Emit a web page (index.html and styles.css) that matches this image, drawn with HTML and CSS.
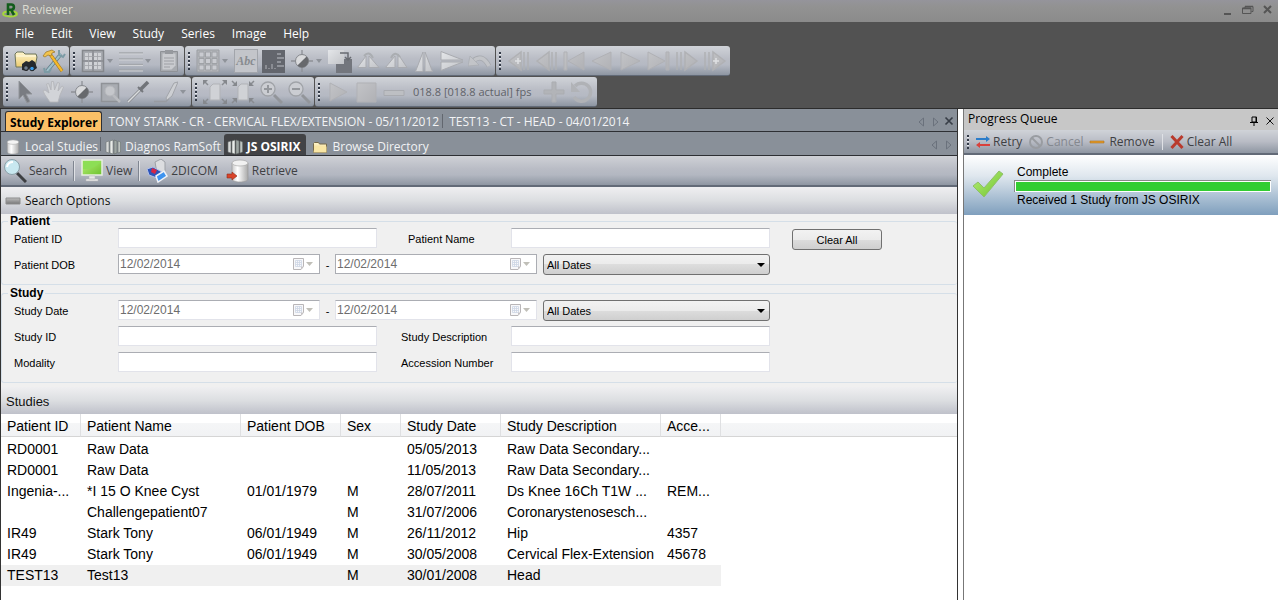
FILE: index.html
```html
<!DOCTYPE html>
<html lang="en">
<head>
<meta charset="utf-8">
<title>Reviewer</title>
<link rel="stylesheet" href="styles.css">
</head>
<body>
<svg class="defs" aria-hidden="true">
  <defs>
    <linearGradient id="pale" x1="0" y1="0" x2="1" y2="1"><stop offset="0" stop-color="#e4e6e9"/><stop offset="1" stop-color="#c2c4c8"/></linearGradient>
    <linearGradient id="faint" x1="0" y1="0" x2="1" y2="1"><stop offset="0" stop-color="#c3c4c7"/><stop offset="1" stop-color="#b0b1b5"/></linearGradient>
    <linearGradient id="folder" x1="0" y1="0" x2="0" y2="1"><stop offset="0" stop-color="#fff6cf"/><stop offset="1" stop-color="#eccb6e"/></linearGradient>
    <linearGradient id="metal" x1="0" y1="0" x2="1" y2="0"><stop offset="0" stop-color="#c9c9c9"/><stop offset=".35" stop-color="#fff"/><stop offset="1" stop-color="#a9a9a9"/></linearGradient>
    <linearGradient id="bar" x1="0" y1="0" x2="0" y2="1"><stop offset="0" stop-color="#bdbdbd"/><stop offset="1" stop-color="#777"/></linearGradient>
    <linearGradient id="leaf" x1="0" y1="0" x2="1" y2="1"><stop offset="0" stop-color="#b9f07a"/><stop offset="1" stop-color="#6cc22c"/></linearGradient>
    <symbol id="contrast" viewBox="0 0 24 24"><path d="M12 1v4M12 19v4M1 12h4M19 12h4" stroke="#8e9197" stroke-width="1.3"/><circle cx="12" cy="12" r="6.5" fill="#d9dadc" stroke="#84878c"/><path d="M7.4 16.6A6.5 6.5 0 0 0 16.6 7.4z" fill="#67696d"/></symbol>
    <symbol id="db" viewBox="0 0 16 18"><path d="M1.500 3.500v11c0 1.700 2.900 2.500 6.500 2.500s6.500-.8 6.500-2.500v-11z" fill="url(#metal)" stroke="#8f8f8f" stroke-width=".6"/><ellipse cx="8" cy="3.500" rx="6.500" ry="2.500" fill="#f4f4f4" stroke="#aaa" stroke-width=".6"/></symbol>
    <symbol id="servers" viewBox="0 0 16 16"><path d="M1 3l3-1v12l-3-1z" fill="#d8dad9" stroke="#707675" stroke-width=".6"/><path d="M5 2l3-1v14l-3-1z" fill="#e8ebe9" stroke="#6c7371" stroke-width=".6"/><path d="M9 1l3 1v12l-3 1z" fill="#9da5a2" stroke="#69706e" stroke-width=".6"/><path d="M13 2l2.500 1v10l-2.500 1z" fill="#bfc5c2" stroke="#6c7371" stroke-width=".6"/></symbol>
    <symbol id="calendar" viewBox="0 0 24 14"><path d="M1.500 1.500h10v8l-2.500 3h-7.500z" fill="#f8f8fa" stroke="#b9b6b8"/><path d="M3.500 3.500h6v6h-6zM5.500 3.500v6M7.500 3.500v6M3.500 5.500h6M3.500 7.500h6" fill="none" stroke="#cdd5e4" stroke-width=".8"/><path d="M9 12.500v-3h2.500z" fill="#c7c4c6"/><path d="M14 5h7l-3.500 4z" fill="#c0bfb8"/></symbol>
    <symbol id="arrows" viewBox="0 0 24 12"><path d="M6.500 2v8l-4.500-4zM16.500 2v8l4.500-4z" fill="none" stroke="#6a717c"/></symbol>
    <symbol id="magnify" viewBox="0 0 24 24"><path d="M15 15l8 8" stroke="#92959a" stroke-width="3"/><circle cx="9" cy="9" r="7" fill="#cbcdd2" stroke="#a0a3a8" stroke-width="1.300"/></symbol>
  </defs>
</svg>
<div class="app">
  <header class="titlebar">
    <svg class="logo" viewBox="0 0 16 16"><ellipse cx="8" cy="12" rx="7" ry="2.500" fill="none" stroke="#a5d83a" stroke-width="1.800"/><path d="M6 13V2.500h3.300a2.500 2.500 0 0 1 0 5.200H6M9 7.700L12 13" fill="none" stroke="#125c1b" stroke-width="2.600"/></svg>
    <h1 class="title">Reviewer</h1>
    <button class="win" aria-label="Minimize"><svg viewBox="0 0 12 12"><path d="M2 10h7" stroke="#555" stroke-width="2"/></svg></button>
    <button class="win" aria-label="Restore"><svg viewBox="0 0 12 12"><path d="M3 4V2.500h8v5H9.500M.5 4h8.500v5.500H.5z" fill="none" stroke="#555"/><path d="M.5 4.500H9M3 2.500h8" stroke="#555" stroke-width="1.500"/></svg></button>
    <button class="win" aria-label="Close"><svg viewBox="0 0 12 12"><path d="M2 2l7 7M9 2l-7 7" stroke="#555" stroke-width="2"/></svg></button>
  </header>
  <nav class="menu"><a href="#">File</a><a href="#">Edit</a><a href="#">View</a><a href="#">Study</a><a href="#">Series</a><a href="#">Image</a><a href="#">Help</a></nav>

  <div class="strips">
    <div class="strip">
      <div class="group"><i class="grip"></i>
        <button class="tool" aria-label="Open"><svg viewBox="0 0 24 24"><path d="M2 18l-1-13 2-2h6l2 2h11l1 3-2 10z" fill="url(#folder)" stroke="#6d745a"/><path d="M2 7h20" stroke="#fffbe4"/><path d="M8 15l4-3 3 1 3-2 3 2 2 6-4 3-3-3-3 3-5-1z" fill="#25292d"/><circle cx="12" cy="19" r="2.300" fill="#6d7c8c" stroke="#222"/><circle cx="18" cy="19.500" r="2.300" fill="#3a9be8" stroke="#222"/></svg></button>
        <button class="tool" aria-label="Tools"><svg viewBox="0 0 24 24"><path d="M5 22L19 5" stroke="#5f7b86" stroke-width="3.600"/><path d="M5 22L19 5" stroke="#9fc0c9" stroke-width="2.200"/><path d="M17 1v5l4 2 2-3M2 19l1 4h4l2-3" fill="none" stroke="#7c9ba5" stroke-width="2"/><path d="M8 5l12 17" stroke="#9a7019" stroke-width="3.200"/><path d="M8 5l12 17" stroke="#f5b92c" stroke-width="2.200"/><path d="M1 7l3-4 6-2 3 2-3 1-1 3-3-1-3 2z" fill="#f2c34e" stroke="#9a7527" stroke-width=".7"/></svg></button>
      </div>
      <div class="group"><i class="grip"></i>
        <button class="tool drop" aria-label="Layout"><svg viewBox="0 0 24 24"><path d="M1.500 1.500h21v21h-21z" fill="#a8abb1" stroke="#84878c" stroke-width="1.500"/><path d="M4 4h7v7H4zM13 4h7v7h-7zM4 13h7v7H4zM13 13h7v7h-7z" fill="#d0d2d6"/><path d="M12 2v20M2 12h20" stroke="#898c91" stroke-width="1.500"/><path d="M4 7.500h16M4 16.500h16M7.500 4v16M16.500 4v16" stroke="#9fa2a7" stroke-width=".8"/></svg></button>
        <button class="tool drop" aria-label="Lines"><svg viewBox="0 0 24 24"><path d="M0 4h24M0 10h24M0 15.500h24M0 21h24" stroke="#a3a6ab" stroke-width="1.500"/><path d="M0 5h24M0 11h24M0 16.500h24M0 22h24" stroke="#cfd1d5"/></svg></button>
        <button class="tool" aria-label="Report"><svg viewBox="0 0 24 24"><path d="M3.500 2.500h17v20h-17z" fill="#a7aaaf" stroke="#8f9297"/><path d="M5.500 4.500h13v12l-4 4h-9z" fill="#c9cbcf"/><path d="M8 1h8v4H8z" fill="#96999e"/><path d="M7 9h10M7 12h10M7 15h10M7 18h6" stroke="#9d9fa4"/></svg></button>
      </div>
      <div class="group"><i class="grip"></i>
        <button class="tool drop" aria-label="Grid"><svg viewBox="0 0 24 24"><path d="M1 1h22v22H1z" fill="#b4b6ba" stroke="#9a9da2"/><path d="M3 3h5v5H3zM9.500 3h5v5h-5zM16 3h5v5h-5zM3 9.500h5v5H3zM9.500 9.500h5v5h-5zM16 9.500h5v5h-5zM3 16h5v5H3zM9.500 16h5v5h-5zM16 16h5v5h-5z" fill="#c9cbd0" stroke="#9b9ea3" stroke-width=".9"/></svg></button>
        <button class="tool word" aria-label="Text overlay">Abc</button>
        <button class="tool" aria-label="Ruler overlay"><svg viewBox="0 0 24 24"><path d="M0 1h23v23H0z" fill="#63666d"/><path d="M15 5h4M15 9h7M15 13h4M15 17h7M4 16v4M7 19v1M10 15v5M13 19v1" stroke="#a0a3a9" stroke-width="1.300"/></svg></button>
        <button class="tool drop" aria-label="Contrast"><svg><use href="#contrast"/></svg></button>
        <button class="tool" aria-label="Layers"><svg viewBox="0 0 24 24"><path d="M8 10h16v14H8z" fill="#73767d"/><path d="M0 1h16v14H0z" fill="url(#pale)"/><path d="M12 4h8v6M17 8l3 3 3-3" fill="none" stroke="#686b71" stroke-width="1.500"/></svg></button>
        <button class="tool" aria-label="Rotate left"><svg viewBox="0 0 24 24"><path d="M1.500 18.500L10 7v11.500zM13 7l10 11.500H13z" fill="url(#pale)" stroke="#a9abb0"/><path d="M8 7q5-6 9 2" fill="none" stroke="#aaadb1" stroke-width="2"/></svg></button>
        <button class="tool" aria-label="Rotate right"><svg viewBox="0 0 24 24"><path d="M1.500 18.500L11 7v11.500zM14 5l9 13.500h-9z" fill="url(#pale)" stroke="#a9abb0"/><path d="M7 9q4-8 9-1" fill="none" stroke="#aaadb1" stroke-width="2"/></svg></button>
        <button class="tool" aria-label="Flip horizontal"><svg viewBox="0 0 24 24"><path d="M3.500 22.500L11 3v19.500zM13 3l7.500 19.500H13z" fill="url(#pale)" stroke="#a9abb0"/></svg></button>
        <button class="tool" aria-label="Flip vertical"><svg viewBox="0 0 24 24"><path d="M1 2.500L23 11H1zM1 13h22L1 21.500z" fill="url(#pale)" stroke="#a9abb0"/></svg></button>
        <button class="tool" aria-label="Undo"><svg viewBox="0 0 24 24"><path d="M5 12q9-8 16 5" fill="none" stroke="#a6a9ae" stroke-width="5"/><path d="M5 12q9-8 16 5" fill="none" stroke="#c2c4c8" stroke-width="3.500"/><path d="M0 17l2-10 9 9z" fill="#c2c4c8" stroke="#a9acb1" stroke-width=".7"/></svg></button>
      </div>
      <div class="group"><i class="grip"></i>
        <button class="tool" aria-label="First study"><svg viewBox="0 0 24 24"><path d="M2 12L14 3v18zM17 3v18M21 3v18" fill="url(#faint)" stroke="#b0b1b4" stroke-width="1.500"/><path d="M8 12h6M11 9v6" stroke="#dfe1e4" stroke-width="1.500"/></svg></button>
        <button class="tool" aria-label="Previous series"><svg viewBox="0 0 24 24"><path d="M2 12L14 3v18zM17 3v18M21 3v18" fill="url(#faint)" stroke="#b0b1b4" stroke-width="1.500"/></svg></button>
        <button class="tool" aria-label="First image"><svg viewBox="0 0 24 24"><path d="M1 3h3v18H1zM5 12L21 3v18z" fill="url(#faint)" stroke="#b0b1b5"/></svg></button>
        <button class="tool" aria-label="Previous image"><svg viewBox="0 0 24 24"><path d="M1 12L20 3v18z" fill="url(#faint)" stroke="#b0b1b5"/></svg></button>
        <button class="tool" aria-label="Next image"><svg viewBox="0 0 24 24"><path d="M21 12L2 3v18z" fill="url(#faint)" stroke="#b0b1b5"/></svg></button>
        <button class="tool" aria-label="Last image"><svg viewBox="0 0 24 24"><path d="M19 3h3v18h-3zM18 12L1 3v18z" fill="url(#faint)" stroke="#b0b1b5"/></svg></button>
        <button class="tool" aria-label="Next series"><svg viewBox="0 0 24 24"><path d="M22 12L10 3v18zM2 3v18M6 3v18" fill="url(#faint)" stroke="#b0b1b4" stroke-width="1.500"/></svg></button>
        <button class="tool" aria-label="Last study"><svg viewBox="0 0 24 24"><path d="M22 12L10 3v18zM2 3v18M6 3v18" fill="url(#faint)" stroke="#b0b1b4" stroke-width="1.500"/><path d="M10 12h6M13 9v6" stroke="#dfe1e4" stroke-width="1.500"/></svg></button>
      </div>
    </div>
    <div class="strip">
      <div class="group"><i class="grip"></i>
        <button class="tool" aria-label="Pointer"><svg viewBox="0 0 24 24"><path d="M5 1v18l4-4 4 8 3-1.500-4-7.500h6z" fill="#797c82" stroke="#92959a"/></svg></button>
        <button class="tool" aria-label="Pan"><svg viewBox="0 0 24 24"><path d="M8 22l-5-7-2-4 2-1 4 3L4.500 4l2-.6L9 10 9.500 1.500h2L12.500 10l3-7.500 2 .5L16 11l4-5 1.600 1L18 15l-2 7z" fill="#d2d4d8" stroke="#b2b4b8" stroke-width=".8"/></svg></button>
        <button class="tool" aria-label="Window level"><svg><use href="#contrast"/></svg></button>
        <button class="tool" aria-label="Zoom region"><svg viewBox="0 0 24 24"><path d="M3.500 3.500h17v18h-17z" fill="#a9acb2" stroke="#8f9297" stroke-width="1.500"/><circle cx="12" cy="11" r="5" fill="#c5c7cb" stroke="#b6b8bc"/><path d="M15 15l7 7" stroke="#b9bbbf" stroke-width="2.500"/></svg></button>
        <button class="tool" aria-label="Draw"><svg viewBox="0 0 24 24"><path d="M2 22L15 9" stroke="#898c91" stroke-width="3"/><path d="M2 22L14 10" stroke="#d9dbde" stroke-width="1.500"/><path d="M14 10l8-8" stroke="#717479" stroke-width="3.500"/><path d="M12 7l5 5" stroke="#74777c" stroke-width="2"/></svg></button>
        <button class="tool drop" aria-label="Annotate"><svg viewBox="0 0 24 24"><path d="M0 21.500h12l3-3" fill="none" stroke="#989ba1" stroke-width="1.500"/><path d="M12 18L20 3l4-1-6 14-5 4z" fill="#cdcfd3" stroke="#a2a5aa"/></svg></button>
      </div>
      <div class="group"><i class="grip"></i>
        <button class="tool" aria-label="Fit to window"><svg viewBox="0 0 24 24"><path d="M7 7l3-3h7v16H7z" fill="#d0d2d6" stroke="#b1b3b7"/><path d="M1 1l4 4M23 1l-4 4M1 23l4-4M23 23l-4-4" stroke="#898c91" stroke-width="1.500"/><path d="M0 0h5L0 5zM24 0v5l-5-5zM0 24v-5l5 5zM24 24h-5l5-5z" fill="#85888d"/></svg></button>
        <button class="tool" aria-label="Actual size"><svg viewBox="0 0 24 24"><path d="M7 7l3-3h7v16H7z" fill="#d0d2d6" stroke="#b1b3b7"/><path d="M1 1l4 4M23 1l-4 4M1 23l4-4M23 23l-4-4" stroke="#898c91" stroke-width="1.500"/><path d="M6 6H1l5-5zM18 6V1l5 5zM6 18v5l-5-5zM18 18h5l-5 5z" fill="#85888d"/></svg></button>
        <button class="tool" aria-label="Zoom in"><svg viewBox="0 0 24 24"><use href="#magnify"/><path d="M5 9h8M9 5v8" stroke="#94979c" stroke-width="2"/></svg></button>
        <button class="tool" aria-label="Zoom out"><svg viewBox="0 0 24 24"><use href="#magnify"/><path d="M5 9h8" stroke="#94979c" stroke-width="2"/></svg></button>
      </div>
      <div class="group"><i class="grip"></i>
        <button class="tool" aria-label="Play"><svg viewBox="0 0 24 24"><path d="M4 3v18l17-9z" fill="url(#faint)" stroke="#b0b1b5"/></svg></button>
        <button class="tool" aria-label="Stop"><svg viewBox="0 0 24 24"><path d="M3 3h19v19H3z" fill="url(#faint)" stroke="#b0b1b5"/></svg></button>
        <button class="tool" aria-label="Slower"><svg viewBox="0 0 24 24"><path d="M2 10.500h20v5H2z" fill="#bdbfc3" stroke="#a9abb0"/></svg></button>
        <span class="fps">018.8 [018.8 actual] fps</span>
        <button class="tool" aria-label="Faster"><svg viewBox="0 0 24 24"><path d="M10 2h4v8h8v4h-8v8h-4v-8H2v-4h8z" fill="#b2b4b8" stroke="#abadb1"/></svg></button>
        <button class="tool" aria-label="Loop"><svg viewBox="0 0 24 24"><path d="M5 6a9 9 0 1 1-1 11" fill="none" stroke="#b0b2b6" stroke-width="3.500"/><path d="M1 2v10h9z" fill="#b1b3b7"/></svg></button>
      </div>
    </div>
  </div>

  <div class="work">
    <main class="explorer">
      <div class="tabs primary">
        <button class="tab active">Study Explorer</button>
        <button class="tab split">TONY STARK - CR - CERVICAL FLEX/EXTENSION - 05/11/2012</button>
        <button class="tab">TEST13 - CT - HEAD - 04/01/2014</button>
        <svg class="nav"><use href="#arrows"/></svg>
        <button class="close" aria-label="Close tab"><svg viewBox="0 0 10 10"><path d="M1.500 1.500l7 7M8.500 1.500l-7 7" stroke="#383e47" stroke-width="1.700"/></svg></button>
      </div>
      <div class="tabs sources">
        <button class="tab split"><svg class="small"><use href="#db"/></svg>Local Studies</button>
        <button class="tab"><svg class="small"><use href="#servers"/></svg>Diagnos RamSoft</button>
        <button class="tab current"><svg class="small"><use href="#servers"/></svg>JS OSIRIX</button>
        <button class="tab"><svg class="small" viewBox="0 0 16 16"><path d="M1.500 13.500v-9l1-1h4l1 1.500h7v8.500z" fill="url(#folder)" stroke="#75694a"/><path d="M1.500 13.500l1-6h12v6z" fill="#f9e6a4"/></svg>Browse Directory</button>
        <svg class="nav"><use href="#arrows"/></svg>
      </div>
      <div class="actions">
        <button class="action split"><svg viewBox="0 0 24 24"><path d="M14 14l9 9" stroke="#3d3f42" stroke-width="3"/><circle cx="9" cy="8" r="7.500" fill="#c8e8f0" stroke="#8ba0a8"/><path d="M4 8q1-5 6-5" fill="none" stroke="#fff" stroke-width="2"/></svg>Search</button>
        <button class="action split"><svg viewBox="0 0 24 24"><path d="M2 1h20v15H2z" fill="url(#leaf)" stroke="#e7eee1" stroke-width="1.500"/><path d="M3 10q10 1 18-7v-1H3z" fill="#8dde55"/><path d="M9 17h6v3H9zM6 20h12v2H6z" fill="#e7e7e7" stroke="#b4b4b4" stroke-width=".5"/></svg>View</button>
        <button class="action"><svg viewBox="0 0 24 24"><path d="M10 3l6-3 4 3v9l-8 2z" fill="#dcdde0" stroke="#9da0a6"/><path d="M2 10l6-2 9 5-5 6-8-3z" fill="#2d54b9" stroke="#b2c1e8"/><path d="M7 9l5 2-2 4-4-2z" fill="#d72644"/><path d="M11 17l8-5 3 5-9 6z" fill="#3e93ef" stroke="#f0f3f8" stroke-width="1.500"/></svg>2DICOM</button>
        <button class="action"><svg viewBox="0 0 24 24"><path d="M6 4v16c0 2 3.500 3 8 3s8-1 8-3V4z" fill="url(#metal)" stroke="#999" stroke-width=".7"/><ellipse cx="14" cy="4" rx="8" ry="3" fill="#f1f1f1" stroke="#aaa" stroke-width=".7"/><path d="M1 15h5v-2l5 4-5 4v-2H1z" fill="#d9442a" stroke="#8f2d1c" stroke-width=".6"/></svg>Retrieve</button>
      </div>
      <h2 class="section options"><svg viewBox="0 0 16 8"><path d="M1 1h14v6H1z" fill="url(#bar)" stroke="#8d8d8d"/></svg>Search Options</h2>
      <form class="form">
        <fieldset class="box">
          <legend>Patient</legend>
          <div class="row"><label for="pid">Patient ID</label><input class="text" id="pid" type="text"><label class="second inset" for="pname">Patient Name</label><input class="text" id="pname" type="text"><button class="clear" type="button">Clear All</button></div>
          <div class="row"><label for="dob1">Patient DOB</label><span class="date framed"><input id="dob1" type="text" value="12/02/2014" disabled><svg><use href="#calendar"/></svg></span><span class="dash">-</span><span class="date framed"><input aria-label="Patient DOB to" type="text" value="12/02/2014" disabled><svg><use href="#calendar"/></svg></span><span class="pick"><select aria-label="Patient DOB range"><option>All Dates</option></select></span></div>
        </fieldset>
        <fieldset class="box">
          <legend>Study</legend>
          <div class="row"><label for="sd1">Study Date</label><span class="date"><input id="sd1" type="text" value="12/02/2014" disabled><svg><use href="#calendar"/></svg></span><span class="dash">-</span><span class="date"><input aria-label="Study Date to" type="text" value="12/02/2014" disabled><svg><use href="#calendar"/></svg></span><span class="pick"><select aria-label="Study Date range"><option>All Dates</option></select></span></div>
          <div class="row"><label for="sid">Study ID</label><input class="text" id="sid" type="text"><label class="second" for="sdesc">Study Description</label><input class="text" id="sdesc" type="text"></div>
          <div class="row"><label for="mod">Modality</label><input class="text" id="mod" type="text"><label class="second" for="acc">Accession Number</label><input class="text" id="acc" type="text"></div>
        </fieldset>
      </form>
      <h2 class="section studies">Studies</h2>
      <div class="results">
        <table class="grid">
          <colgroup><col class="c80"><col class="c160"><col class="c100"><col class="c60"><col class="c100"><col class="c160"><col class="c60"><col></colgroup>
          <thead><tr><th>Patient ID</th><th>Patient Name</th><th>Patient DOB</th><th>Sex</th><th>Study Date</th><th>Study Description</th><th>Acce...</th><td></td></tr></thead>
          <tbody>
            <tr><td>RD0001</td><td>Raw Data</td><td></td><td></td><td>05/05/2013</td><td>Raw Data Secondary...</td><td></td></tr>
            <tr><td>RD0001</td><td>Raw Data</td><td></td><td></td><td>11/05/2013</td><td>Raw Data Secondary...</td><td></td></tr>
            <tr><td>Ingenia-...</td><td>*I 15 O Knee Cyst</td><td>01/01/1979</td><td>M</td><td>28/07/2011</td><td>Ds Knee 16Ch T1W ...</td><td>REM...</td></tr>
            <tr><td></td><td>Challengepatient07</td><td></td><td>M</td><td>31/07/2006</td><td>Coronarystenosesch...</td><td></td></tr>
            <tr><td>IR49</td><td>Stark Tony</td><td>06/01/1949</td><td>M</td><td>26/11/2012</td><td>Hip</td><td>4357</td></tr>
            <tr><td>IR49</td><td>Stark Tony</td><td>06/01/1949</td><td>M</td><td>30/05/2008</td><td>Cervical Flex-Extension</td><td>45678</td></tr>
            <tr class="selected"><td>TEST13</td><td>Test13</td><td></td><td>M</td><td>30/01/2008</td><td>Head</td><td></td></tr>
          </tbody>
        </table>
      </div>
    </main>
    <aside class="queue">
      <div class="queuehead"><h2>Progress Queue</h2>
        <button class="close" aria-label="Pin"><svg viewBox="0 0 10 10"><path d="M3 1h4.500v5H3zM1 6.500h8M5 6.500V10M7 1v5" fill="none" stroke="#000"/></svg></button>
        <button class="close" aria-label="Close panel"><svg viewBox="0 0 10 10"><path d="M1.500 1.500l7 7M8.500 1.500l-7 7" stroke="#111"/></svg></button>
      </div>
      <div class="queuebar"><i class="grip"></i>
        <button class="qbtn"><svg viewBox="0 0 16 16"><path d="M1 4h10V2l4 3-4 3V6H1z" fill="#2b7cc9"/><path d="M15 10H5V8l-4 3 4 3v-2h10z" fill="#d9413c"/></svg>Retry</button>
        <button class="qbtn" disabled><svg viewBox="0 0 16 16"><circle cx="8" cy="8" r="6" fill="none" stroke="#999ca1" stroke-width="2"/><path d="M4 4l8 8" stroke="#999ca1" stroke-width="2"/></svg>Cancel</button>
        <button class="qbtn split"><svg viewBox="0 0 16 16"><path d="M1 7h14v2H1z" fill="#e79b24" stroke="#a87225" stroke-width=".6"/></svg>Remove</button>
        <button class="qbtn"><svg viewBox="0 0 16 16"><path d="M2.500 2l11 12M13.500 2l-11 12" stroke="#b93a2c" stroke-width="3"/></svg>Clear All</button>
      </div>
      <section class="job">
        <svg class="check" viewBox="0 0 32 28"><path d="M1 16l5-4 6 6L27 1l4 3-19 23z" fill="url(#leaf)" stroke="#8fbf69"/></svg>
        <div class="jobinfo"><p>Complete</p><div class="progress" role="progressbar" aria-valuenow="100" aria-label="Complete"><div class="fill"></div></div><p>Received 1 Study from JS OSIRIX</p></div>
      </section>
    </aside>
  </div>
</div>
</body>
</html>
```
FILE: styles.css
```css
* { box-sizing: border-box; }
body { margin: 0; background: #525252; font: 12px/16px "Open Sans", "Noto Sans", sans-serif; color: #222; }
button, input, select { font: inherit; color: inherit; margin: 0; padding: 0; border: 0; background: none; }
h1, h2, p { margin: 0; font-size: inherit; font-weight: 400; }
svg { display: block; flex: none; }
.defs { position: absolute; width: 0; height: 0; }
.app { display: flex; flex-direction: column; min-height: 100vh; }

.titlebar { display: flex; align-items: center; height: 22px; padding: 0 0 2px 2px; background: linear-gradient(#95949b, #929292 30%, #8b8b8b); }
.logo { width: 16px; height: 16px; }
.title { flex: 1; padding-left: 4px; color: #dcdcd2; }
.win { width: 20px; height: 12px; }
.win svg { width: 12px; height: 12px; margin: auto; }

.menu { display: flex; gap: 17px; height: 24px; padding: 4px 15px 0; }
.menu a { color: #fff; text-decoration: none; }

.strips { display: flex; flex-direction: column; gap: 1px; padding: 0 3px 1px; border-bottom: 1px solid #2c2c2c; }
.strip { display: flex; gap: 1px; }
.group { display: flex; align-items: center; height: 30px; padding-right: 1px; border-bottom: 1px solid #626a77; border-radius: 3px; background: linear-gradient(#d0d3d8, #b9bcc5 45%, #b5b9c3 65%, #8e96a2); }
.grip { flex: none; width: 2px; height: 18px; margin: 0 4px 0 3px; background: repeating-linear-gradient(#333a47 0 2px, #e9ebef 2px 3px, transparent 3px 4px); }
.tool { display: flex; align-items: center; width: 28px; height: 28px; padding: 0 2px; }
.tool svg { width: 24px; height: 24px; }
.drop { width: 38px; gap: 2px; }
.drop::after { content: ""; border: 3px solid transparent; border-top: 4px solid #8f939a; border-bottom: 0; }
.word { justify-content: center; width: 24px; height: 24px; margin: 0 2px; padding: 0; border: 1px solid #a2a5ab; background: #c3c5ca; font: italic bold 12px/22px "Liberation Serif", serif; color: #888b90; }
.fps { padding: 0 9px 0 5px; font-size: 11px; color: #5f6268; }

.work { flex: 1; display: flex; gap: 5px; background: #fff; }
.explorer { flex: 1; min-width: 0; display: flex; flex-direction: column; border: solid #333; border-width: 0 1px; }
.tabs { display: flex; height: 23px; border-bottom: 1px solid #2d2f33; background: #899099; }
.tab { display: flex; align-items: center; gap: 4px; white-space: nowrap; color: #f2f3f5; }
.split { background: linear-gradient(#62676f, #62676f) right 5px / 1px 14px no-repeat; }
.primary .tab { padding: 4px 4px 0 6px; }
.primary .split { padding-left: 4px; }
.primary .active { margin: 2px 3px 0 4px; padding: 2px 3px 0 4px; border: 1px solid #2d2f33; border-bottom: 0; border-radius: 3px 3px 0 0; background: #fbc067; color: #000; font-weight: 700; }
.sources { height: 24px; padding: 0 3px 0 2px; }
.sources .tab { padding: 6px 3px 0 4px; }
.sources .split { padding-left: 2px; }
.sources .current { margin: 2px 2px 0 0; padding: 4px 6px 0 3px; border-radius: 3px 3px 0 0; background: #424346; color: #fff; font-weight: 700; }
.small { width: 16px; height: 16px; }
.nav { width: 24px; height: 12px; margin: 7px 0 0 auto; }
.close { width: 16px; height: 16px; margin-top: 4px; }
.close svg { width: 10px; height: 10px; margin: auto; }

.actions { display: flex; height: 31px; border-bottom: 2px solid #626a77; background: linear-gradient(#cfd1d6, #b9bcc5 45%, #b3b7c1 65%, #8e96a2); }
.action { display: flex; align-items: center; gap: 2px; padding: 0 6px 0 2px; color: #3e4043; }
.action svg { width: 24px; height: 24px; }
.action.split { margin-right: 3px; padding-right: 8px; background: linear-gradient(90deg, #7f8590 50%, #dfe1e5 50%) right 5px / 2px 20px no-repeat; }

.section { display: flex; align-items: center; height: 27px; background: linear-gradient(#efeff1, #dcdee1 50%, #bfc1ca); color: #111; }
.options { gap: 4px; padding-left: 4px; }
.options svg { width: 16px; height: 8px; }
.studies { padding: 2px 5px 0; font: 13px/16px "Liberation Sans", Arial, sans-serif; }

.form { display: flex; flex-direction: column; padding-bottom: 3px; background: #f0f0f0; font: 11px/16px "Liberation Sans", Arial, sans-serif; color: #000; }
.box { display: flex; flex-direction: column; gap: 6px; min-width: 0; margin: 0 0 1px; padding: 0 0 10px 12px; border: 1px solid #d5dfe8; border-right: 0; border-radius: 3px; }
.box legend { margin-left: -6px; padding: 0 2px; font-size: 12px; line-height: 14px; font-weight: 700; }
.row { display: flex; align-items: flex-start; height: 20px; }
.row label { width: 104px; padding-top: 3px; }
.row .second { width: 110px; margin-left: 24px; }
.row .inset { padding-left: 7px; }
.text { width: 259px; height: 20px; padding: 0 3px; border: 1px solid #e2e3ea; border-top-color: #abadb3; background: #fff; }
.date { display: flex; align-items: center; width: 202px; height: 20px; border: 1px solid #e2e3ea; border-top-color: #abadb3; background: #fff; }
.framed { border-color: #abadb3; }
.date input { flex: 1; min-width: 0; padding-left: 1px; font-size: 12px; color: #6d6d6d; }
.date svg { width: 24px; height: 14px; margin-right: 3px; }
.dash { width: 15px; padding-top: 3px; text-align: center; }
.pick { position: relative; width: 227px; height: 21px; margin-left: 6px; }
.pick::after { content: ""; position: absolute; right: 5px; top: 9px; border: 4px solid transparent; border-top-color: #000; border-bottom: 0; pointer-events: none; }
.pick select { appearance: none; width: 100%; height: 100%; padding: 0 3px; border: 1px solid #707070; border-radius: 3px; background: linear-gradient(#f2f2f2, #ebebeb 50%, #ddd 50%, #cfcfcf); }
.clear { width: 90px; height: 21px; margin: 1px 0 0 22px; border: 1px solid #707070; border-radius: 3px; background: linear-gradient(#f2f2f2, #ebebeb 50%, #ddd 50%, #cfcfcf); }

.results { flex: 1; background: #fff; }
.grid { width: 100%; table-layout: fixed; border-collapse: separate; border-spacing: 0; font: 14px/21px "Liberation Sans", Arial, sans-serif; color: #000; white-space: nowrap; }
.c60 { width: 60px; }
.c80 { width: 80px; }
.c100 { width: 100px; }
.c160 { width: 160px; }
.grid th, .grid td { padding: 0 0 0 6px; text-align: left; font-weight: 400; }
.grid thead th, .grid thead td { height: 23px; padding-top: 2px; border-bottom: 1px solid #d5d5d5; background: linear-gradient(#fff 40%, #f5f6f7 40%, #f1f2f4); line-height: 20px; }
.grid thead th { border-right: 1px solid #dfe0e2; }
.grid tbody::before { content: ""; display: block; height: 2px; }
.grid .selected td { background: #f0f0f0; }
.grid .selected td:empty { height: 21px; }

.queue { width: 315px; border-left: 1px solid #777; }
.queuehead { display: flex; height: 21px; padding-left: 4px; background: #c7c7c7; }
.queuehead h2 { flex: 1; padding-top: 2px; color: #000; }
.queuebar { display: flex; align-items: center; height: 25px; border-bottom: 2px solid #626a77; background: linear-gradient(#d0d3d8, #b9bcc5 50%, #8e96a2); }
.queuebar .grip { height: 14px; }
.qbtn { display: flex; align-items: center; gap: 2px; padding: 0 4px 0 2px; color: #3e4043; }
.qbtn:disabled { color: #84888f; }
.qbtn svg { width: 16px; height: 16px; }
.qbtn.split { gap: 4px; margin-right: 4px; padding-right: 7px; border-right: 1px solid #dfe1e5; background: none; }
.job { display: flex; gap: 10px; padding: 10px 7px 7px 8px; background: linear-gradient(#fff, #dfe7ee 35%, #7f9fbd); }
.check { width: 32px; height: 28px; margin-top: 5px; }
.jobinfo { flex: 1; font: 12px/15px "Liberation Sans", Arial, sans-serif; color: #000; }
.jobinfo p { padding-left: 3px; }
.progress { height: 12px; margin-bottom: 1px; padding: 1px; border: 1px solid #888; border-width: 1px 0 0 1px; background: #fff; }
.fill { height: 100%; background: #32cd32; }
```
